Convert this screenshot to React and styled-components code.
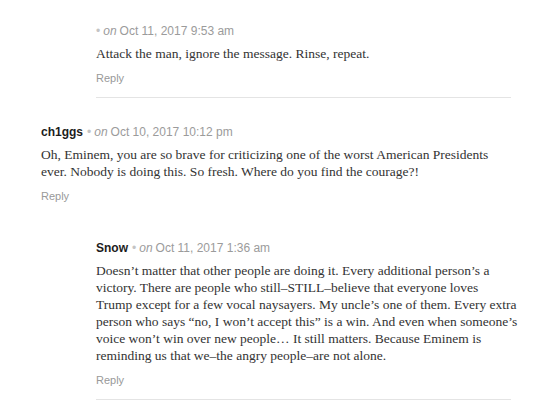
import React from "react";
import styled, { createGlobalStyle } from "styled-components";

const Global = createGlobalStyle`
  html, body { margin: 0; padding: 0; background: #fff; }
  body { font-family: "Liberation Serif", serif; }
`;

const Page = styled.div`
  margin-top: -3px;
  padding-left: 41px;
  width: 470px;
`;

const Comment = styled.div`
  padding: 26px 0 ${(p) => (p.$divider ? "12px" : "11px")};
  border-bottom: ${(p) => (p.$divider ? "1px solid #e4e4e4" : "none")};
`;

const Replies = styled.div`
  padding-left: 55px;
`;

const Meta = styled.div`
  font-family: "Liberation Sans", Arial, sans-serif;
  font-size: 12px;
  line-height: 16px;
  color: #9b9b9b;
  white-space: nowrap;
`;

const Name = styled.span`
  color: #1c1c1c;
  font-weight: 700;
  margin-right: 4px;
`;

const Dot = styled.span`
  color: #c4c4c4;
  margin-right: 3px;
`;

const On = styled.em`
  margin-right: 3px;
`;

const Body = styled.p`
  margin: 6px -40px 0 0;
  font-size: 13.5px;
  line-height: 17px;
  color: #333;
  white-space: nowrap;
`;

const Line = styled.span`
  display: block;
`;

const Reply = styled.div`
  margin-top: 9px;
  font-family: "Liberation Sans", Arial, sans-serif;
  font-size: 11px;
  line-height: 14px;
  color: #999;
`;

function CommentItem({ name, date, lines, divider }) {
  return (
    <Comment $divider={divider}>
      <Meta>
        {name && <Name>{name}</Name>}
        <Dot>•</Dot>
        <On>on</On>
        {date}
      </Meta>
      <Body>
        {lines.map((l, i) => (
          <Line key={i}>{l}</Line>
        ))}
      </Body>
      <Reply>Reply</Reply>
    </Comment>
  );
}

export default function App() {
  return (
    <>
      <Global />
      <Page>
        <Replies>
          <CommentItem
            date="Oct 11, 2017 9:53 am"
            divider
            lines={["Attack the man, ignore the message. Rinse, repeat."]}
          />
        </Replies>
        <CommentItem
          name="ch1ggs"
          date="Oct 10, 2017 10:12 pm"
          lines={[
            "Oh, Eminem, you are so brave for criticizing one of the worst American Presidents",
            "ever. Nobody is doing this. So fresh. Where do you find the courage?!",
          ]}
        />
        <Replies>
          <CommentItem
            name="Snow"
            date="Oct 11, 2017 1:36 am"
            divider
            lines={[
              "Doesn’t matter that other people are doing it. Every additional person’s a",
              "victory. There are people who still–STILL–believe that everyone loves",
              "Trump except for a few vocal naysayers. My uncle’s one of them. Every extra",
              "person who says “no, I won’t accept this” is a win. And even when someone’s",
              "voice won’t win over new people… It still matters. Because Eminem is",
              "reminding us that we–the angry people–are not alone.",
            ]}
          />
        </Replies>
      </Page>
    </>
  );
}
